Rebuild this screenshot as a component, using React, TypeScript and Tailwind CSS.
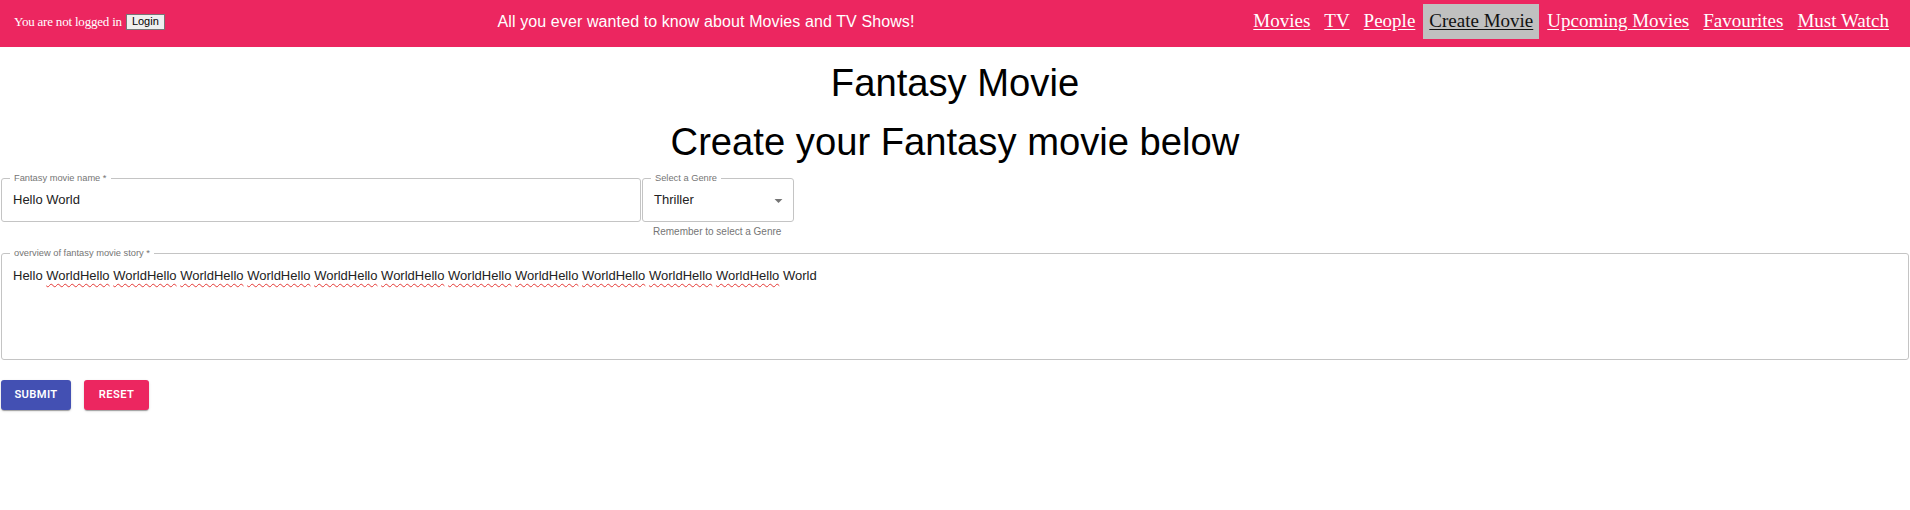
import React from "react";

const navItems = ["Movies", "TV", "People", "Create Movie", "Upcoming Movies", "Favourites", "Must Watch"];

function Label({ children }: { children: React.ReactNode }) {
  return (
    <span className="absolute left-[8px] top-[-7px] bg-white px-[4px] text-[9.3px] leading-[12px] text-[#757575] whitespace-nowrap">
      {children}
    </span>
  );
}

export default function App() {
  const story: React.ReactNode[] = ["Hello "];
  for (let i = 0; i < 11; i++) {
    story.push(
      <span key={i} className="underline decoration-wavy decoration-[#e53935] decoration-[1px] underline-offset-[3px]">
        WorldHello
      </span>
    );
    story.push(" ");
  }
  story.push("World");

  return (
    <div className="w-[1910px] min-h-[510px] bg-white font-['Liberation_Sans',Arial,sans-serif]">
      <header className="flex h-[47px] items-center justify-between bg-[#ec2660] pb-[4px] pl-[14px] pr-[15px]">
        <div className="flex items-center font-['Liberation_Serif','Times_New_Roman',serif] text-[13px] text-white tracking-[-0.2px]">
          <span>You are not logged in</span>
          <button className="ml-[4px] flex h-[16px] items-center border border-[#767676] bg-[#efefef] px-[5px] font-['Liberation_Sans',Arial,sans-serif] text-[11px] tracking-normal text-black">
            Login
          </button>
        </div>
        <div className="text-[16px] tracking-[0.1px] text-white">All you ever wanted to know about Movies and TV Shows!</div>
        <nav className="flex items-center gap-[2px] font-['Liberation_Serif','Times_New_Roman',serif] text-[19px]">
          {navItems.map((item) => (
            <a
              key={item}
              className={
                item === "Create Movie"
                  ? "flex h-[35px] items-center bg-[#c0c0c0] px-[6px] text-[#111] underline underline-offset-[2px]"
                  : "flex h-[35px] items-center px-[6px] text-white underline underline-offset-[2px]"
              }
            >
              {item}
            </a>
          ))}
        </nav>
      </header>

      <main className="px-[1px]">
        <h1 className="mt-[14px] text-center text-[38.2px] leading-[44px] text-black">Fantasy Movie</h1>
        <h2 className="mt-[15px] text-center text-[38.2px] leading-[44px] text-black">Create your Fantasy movie below</h2>

        <div className="mt-[14px] flex items-start">
          <div className="relative flex h-[44px] w-[640px] items-center rounded-[3px] border border-[#c4c4c4] px-[11px] text-[13px] text-[#222]">
            <Label>Fantasy movie name *</Label>
            <span>Hello World</span>
          </div>
          <div className="ml-[1px] flex flex-col">
            <div className="relative flex h-[44px] w-[152px] items-center justify-between rounded-[3px] border border-[#c4c4c4] pl-[11px] pr-[5px] text-[13px] text-[#222]">
              <Label>Select a Genre</Label>
              <span>Thriller</span>
              <svg width="19" height="19" viewBox="0 0 24 24" className="text-[#757575]">
                <path d="M7 10l5 5 5-5z" fill="currentColor" />
              </svg>
            </div>
            <span className="ml-[11px] mt-[2px] text-[10px] leading-[16px] text-[#757575]">Remember to select a Genre</span>
          </div>
        </div>

        <div className="relative mt-[13px] h-[107px] rounded-[3px] border border-[#c4c4c4] px-[11px] pt-[14px] text-[13px] leading-[15px] text-[#222]">
          <Label>overview of fantasy movie story *</Label>
          <div>{story}</div>
        </div>

        <div className="mt-[20px] flex items-center">
          <button className="flex h-[30px] w-[70px] items-center justify-center rounded-[3px] bg-[#4350b3] font-['Roboto',Arial,sans-serif] text-[11.2px] font-semibold tracking-[0.35px] text-white shadow-[0_2px_1px_-1px_rgba(0,0,0,0.2),0_1px_1px_0_rgba(0,0,0,0.14),0_1px_3px_0_rgba(0,0,0,0.12)]">
            SUBMIT
          </button>
          <button className="ml-[13px] flex h-[30px] w-[65px] items-center justify-center rounded-[3px] bg-[#ec2660] font-['Roboto',Arial,sans-serif] text-[11.2px] font-semibold tracking-[0.35px] text-white shadow-[0_2px_1px_-1px_rgba(0,0,0,0.2),0_1px_1px_0_rgba(0,0,0,0.14),0_1px_3px_0_rgba(0,0,0,0.12)]">
            RESET
          </button>
        </div>
      </main>
    </div>
  );
}
